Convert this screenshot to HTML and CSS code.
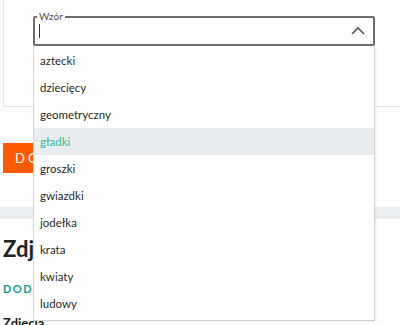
FILE: index.html
```html
<html>

<head>
  <meta name="viewport" content="width=device-width, initial-scale=1.0">
  <link rel="stylesheet" href="styles.css">
</head>

<body>
  <div class="card">
    <div class="field">
      <span class="field-label">Wzór</span>
      <span class="caret"></span>
      <svg class="chevron" width="14" height="9" viewBox="0 0 14 9">
        <path d="M1 8 L7 2 L13 8" fill="none" stroke="#555" stroke-width="1.6"/>
      </svg>
      <ul class="options">
        <li>aztecki</li>
        <li>dziecięcy</li>
        <li>geometryczny</li>
        <li class="active">gładki</li>
        <li>groszki</li>
        <li>gwiazdki</li>
        <li>jodełka</li>
        <li>krata</li>
        <li>kwiaty</li>
        <li>ludowy</li>
      </ul>
    </div>
  </div>

  <button class="add-btn">DODAJ</button>

  <div class="band"></div>

  <div class="section">
    <h2 class="section-title">Zdjęcia</h2>
    <p class="section-link">DODAJ ZDJĘCIE</p>
    <h3 class="section-sub">Zdjęcia</h3>
  </div>
</body>

</html>
```

FILE: styles.css
```css
body {
  margin: 0;
  font-family: Lato, "Open Sans", sans-serif;
  color: #333;
  background: #fff;
  overflow: hidden;
}

.card {
  margin-left: 3px;
  margin-right: -30px;
  height: 90px;
  border: 1px solid #e4e4e4;
  border-top: none;
  padding: 16px 0 0 29px;
}

.field {
  position: relative;
  width: 342px;
  height: 30px;
  border: 2px solid #6e6e6e;
  border-radius: 2px;
  box-sizing: border-box;
}

.field-label {
  position: absolute;
  left: 2px;
  top: -8px;
  padding: 0 2px;
  background: #fff;
  color: #555;
  font-size: 10px;
  line-height: 12px;
}

.caret {
  position: absolute;
  left: 4px;
  top: 6px;
  width: 1px;
  height: 14px;
  background: #333;
}

.chevron {
  position: absolute;
  right: 8px;
  top: 8px;
}

.options {
  position: absolute;
  left: -2px;
  top: 28px;
  width: 342px;
  margin: 0;
  padding: 1px 0 3px;
  list-style: none;
  background: #fff;
  border: 1px solid #d4d4d4;
  border-top: none;
  box-sizing: border-box;
  box-shadow: 1px 1px 2px rgba(0, 0, 0, 0.08);
  z-index: 2;
}

.options li {
  height: 27px;
  line-height: 27px;
  padding-left: 6px;
  font-size: 11.5px;
  color: #2a2a2a;
}

.options li.active {
  background: #e9edf0;
  color: #34b99a;
}

.add-btn {
  display: block;
  margin: 36px 0 0 3px;
  height: 30px;
  padding: 0 12px;
  border: none;
  background: #ff5a00;
  color: #fff;
  font-family: Lato, sans-serif;
  font-size: 13px;
  font-weight: normal;
  letter-spacing: 3px;
}

.band {
  margin-top: 34px;
  height: 12px;
  background: #eceff1;
}

.section {
  padding-left: 3px;
}

.section-title {
  margin: 16px 0 0;
  font-size: 22px;
  line-height: 28px;
  font-weight: bold;
  color: #222;
}

.section-link {
  margin: 19px 0 0;
  font-size: 11px;
  font-weight: bold;
  letter-spacing: 1.5px;
  color: #13a08a;
}

.section-sub {
  margin: 20px 0 0;
  font-size: 13px;
  font-weight: bold;
  color: #222;
}
```
